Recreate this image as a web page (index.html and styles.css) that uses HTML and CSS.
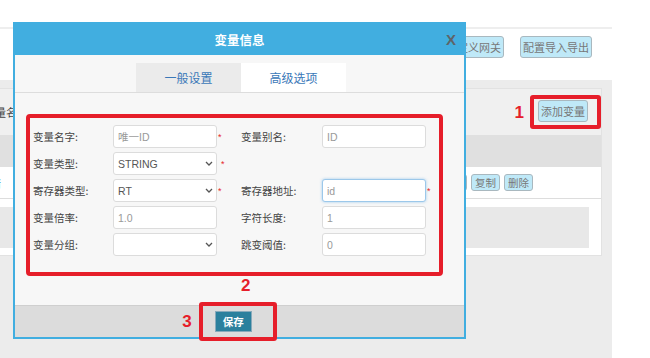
FILE: index.html
```html
<!DOCTYPE html>
<html lang="zh-CN">
<head>
    <meta charset="UTF-8">
    <meta name="viewport" content="width=device-width, initial-scale=1.0">
    <title>变量信息</title>
    <link rel="stylesheet" href="styles.css">
</head>
<body>
    <div class="page">
        <div class="topbar"></div>
        <div class="toolbar">
            <button class="btn">自定义网关</button>
            <button class="btn">配置导入导出</button>
        </div>
        <div class="main">
            <div class="panel">
                <div class="panel-head">
                    <span class="search-label">变量名称:</span>
                    <div class="marked">
                        <span class="mark">1</span>
                        <span class="mark-box"><button class="btn">添加变量</button></span>
                    </div>
                </div>
                <div class="table-head"></div>
                <div class="table-row">
                    <a class="link">详情</a>
                    <div class="actions">
                        <button class="btn btn-sm">编辑</button>
                        <button class="btn btn-sm">复制</button>
                        <button class="btn btn-sm">删除</button>
                    </div>
                </div>
                <div class="panel-foot">
                    <div class="pager"></div>
                </div>
            </div>
        </div>
    </div>

    <div class="dialog">
        <div class="dialog-head">
            <span class="dialog-title">变量信息</span>
            <span class="close">X</span>
        </div>
        <div class="dialog-body">
            <div class="tabs">
                <div class="tab">一般设置</div>
                <div class="tab active">高级选项</div>
            </div>

            <div class="form-box">
                <label class="label">变量名字:</label>
                <div class="field">唯一ID</div>
                <span class="star">*</span>
                <label class="label">变量别名:</label>
                <div class="field">ID</div>
                <span></span>

                <label class="label">变量类型:</label>
                <div class="field select"><span>STRING</span><svg width="8" height="5" viewBox="0 0 8 5"><path d="M1 1l3 3 3-3" fill="none" stroke="#555" stroke-width="1.3"/></svg></div>
                <span class="star star-far">*</span>
                <span></span>
                <span></span>
                <span></span>

                <label class="label">寄存器类型:</label>
                <div class="field select"><span>RT</span><svg width="8" height="5" viewBox="0 0 8 5"><path d="M1 1l3 3 3-3" fill="none" stroke="#555" stroke-width="1.3"/></svg></div>
                <span class="star">*</span>
                <label class="label">寄存器地址:</label>
                <div class="field focus">id</div>
                <span class="star">*</span>

                <label class="label">变量倍率:</label>
                <div class="field">1.0</div>
                <span></span>
                <label class="label">字符长度:</label>
                <div class="field">1</div>
                <span></span>

                <label class="label">变量分组:</label>
                <div class="field select"><span></span><svg width="8" height="5" viewBox="0 0 8 5"><path d="M1 1l3 3 3-3" fill="none" stroke="#555" stroke-width="1.3"/></svg></div>
                <span></span>
                <label class="label">跳变阈值:</label>
                <div class="field">0</div>
                <span></span>
            </div>

            <div class="note">2</div>
        </div>
        <div class="dialog-foot">
            <span class="mark">3</span>
            <span class="mark-box save-box"><button class="btn-save">保存</button></span>
        </div>
    </div>
</body>
</html>
```

FILE: styles.css
```css
:root {
    --blue: #41aee0;
    --red: #e61e2a;
    --btn-bg: #bfe9f8;
    --text: #333333;
}

* {
    margin: 0;
    padding: 0;
    box-sizing: border-box;
}

body {
    width: 650px;
    height: 358px;
    overflow: hidden;
    position: relative;
    background: #ffffff;
    color: var(--text);
    font-family: "Liberation Sans", "Noto Sans CJK SC", sans-serif;
    font-size: 11px;
}

.page {
    width: 652px;
    margin-left: -40px;
}

.topbar {
    height: 29px;
    border-bottom: 2px solid #eeeeee;
}

.toolbar {
    height: 51px;
    display: flex;
    justify-content: flex-end;
    align-items: flex-start;
    gap: 16px;
    padding: 7px 20px 0 0;
}

.btn {
    height: 22px;
    padding: 0 2px;
    background: var(--btn-bg);
    border: 1px solid #a9b8bf;
    border-radius: 3px;
    color: #777777;
    font-family: "Noto Sans CJK SC", sans-serif;
    font-size: 11px;
}

.btn-sm {
    height: 17px;
    padding: 0 3px;
    font-size: 10.5px;
    line-height: 15px;
}

.main {
    height: 278px;
    background: #ececec;
    padding: 8px 10px 0 0;
}

.panel {
    background: #f0f0f0;
    border: 1px solid #e2e2e2;
    border-left: none;
}

.panel-head {
    height: 46px;
    display: flex;
    align-items: center;
    justify-content: space-between;
    padding-left: 24px;
}

.search-label {
    color: #444444;
}

.marked {
    display: flex;
    align-items: center;
}

.mark {
    color: var(--red);
    font-family: "Liberation Sans", sans-serif;
    font-weight: bold;
    font-size: 17px;
    line-height: 17px;
    margin-right: 6px;
}

.mark-box {
    display: flex;
    align-items: center;
    border: 4px solid var(--red);
    border-radius: 3px;
    padding: 1px 9px 3px 4px;
}

.table-head {
    height: 32px;
    background: #e0e0e0;
}

.table-row {
    height: 32px;
    background: #ffffff;
    border-bottom: 1px solid #dddddd;
    display: flex;
    align-items: center;
    justify-content: space-between;
    padding: 0 68px 0 19px;
}

.link {
    color: #2a8fd8;
}

.actions {
    display: flex;
    gap: 4px;
}

.panel-foot {
    background: #ffffff;
    padding: 8px 12px 7px 0;
}

.pager {
    height: 41px;
    background: #e8e8e8;
}

/* dialog */
.dialog {
    position: absolute;
    left: 13px;
    top: 22px;
    width: 453px;
    border: 2px solid var(--blue);
    background: #f7f7f7;
}

.dialog-head {
    position: relative;
    height: 31px;
    background: var(--blue);
    display: flex;
    align-items: center;
    justify-content: center;
}

.dialog-title {
    color: #ffffff;
    font-family: "Noto Sans CJK SC", sans-serif;
    font-weight: bold;
    font-size: 12.5px;
}

.close {
    position: absolute;
    right: 8px;
    top: 7px;
    color: #5e6468;
    font-family: "Liberation Sans", sans-serif;
    font-weight: bold;
    font-size: 15px;
}

.dialog-body {
    padding-top: 8px;
}

.tabs {
    display: flex;
    justify-content: center;
    padding-left: 3px;
    border-bottom: 1px solid #dddddd;
}

.tab {
    width: 105px;
    height: 29px;
    display: flex;
    align-items: center;
    justify-content: center;
    background: #ebebeb;
    color: #3a78b8;
    font-family: "Noto Sans CJK SC", sans-serif;
    font-size: 12px;
}

.tab.active {
    background: #ffffff;
}

.form-box {
    margin: 21px 21px 0 11px;
    border: 4px solid var(--red);
    border-radius: 4px;
    padding: 7px 0 16px 3px;
    display: grid;
    grid-template-columns: 80px 104px 24px 81px 104px 1fr;
    grid-auto-rows: 23px;
    row-gap: 4px;
    align-items: center;
}

.label {
    color: #444444;
    font-family: "Noto Sans CJK SC", sans-serif;
    font-size: 10.5px;
}

.field {
    height: 23px;
    display: flex;
    align-items: center;
    justify-content: space-between;
    padding: 0 4px 0 4px;
    background: #ffffff;
    border: 1px solid #dcdcdc;
    border-radius: 3px;
    color: #999999;
    font-size: 10.5px;
}

.select {
    color: #555555;
    padding-right: 3px;
}

.focus {
    border-color: #9cc8ea;
    box-shadow: 0 0 3px rgba(102, 175, 233, 0.6);
}

.star {
    color: var(--red);
    font-size: 9px;
    margin-left: 1px;
}

.star-far {
    margin-left: 4px;
}

.note {
    height: 29px;
    padding: 1px 0 0 226px;
    color: var(--red);
    font-weight: bold;
    font-size: 17px;
    line-height: 17px;
}

.dialog-foot {
    height: 32px;
    background: #dcdcdc;
    border-top: 1px solid #cfcfcf;
    display: flex;
    align-items: center;
    justify-content: center;
    padding-right: 20px;
}

.dialog-foot .mark {
    margin-right: 7px;
}

.save-box {
    height: 39px;
    padding: 0 21px 0 12px;
}

.btn-save {
    width: 37px;
    height: 21px;
    background: #2b809d;
    border: 1px solid #88aabb;
    color: #ffffff;
    font-family: "Noto Sans CJK SC", sans-serif;
    font-weight: bold;
    font-size: 10.5px;
}
```
